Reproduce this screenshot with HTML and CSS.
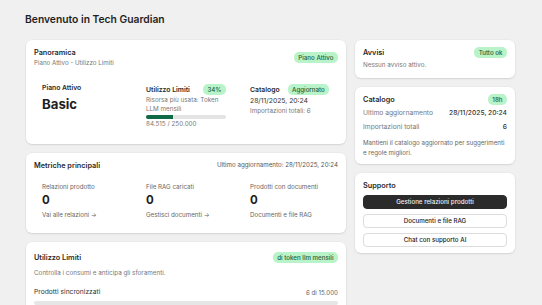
FILE: index.html
```html
<!DOCTYPE html>
<html lang="it">
<head>
  <meta charset="UTF-8" />
  <title>Tech Guardian</title>
  <link rel="stylesheet" href="styles.css">
</head>
<body>
  <h1 class="page-title">Benvenuto in Tech Guardian</h1>

  <div class="layout">
    <div class="col-main">

      <section class="card">
        <div class="card-head">
          <div>
            <h2>Panoramica</h2>
            <p class="sub">Piano Attivo - Utilizzo Limiti</p>
          </div>
          <span class="badge">Piano Attivo</span>
        </div>
        <div class="overview">
          <div class="ov-col">
            <div class="ov-label">Piano Attivo</div>
            <div class="plan">Basic</div>
          </div>
          <div class="ov-col">
            <div class="ov-row">
              <span class="ov-label">Utilizzo Limiti</span>
              <span class="badge">34%</span>
            </div>
            <p class="muted narrow">Risorsa più usata: Token LLM mensili</p>
            <div class="bar"><div class="bar-fill" style="width: 34%"></div></div>
            <p class="muted">84.515 / 250.000</p>
          </div>
          <div class="ov-col">
            <div class="ov-row">
              <span class="ov-label">Catalogo</span>
              <span class="badge">Aggiornato</span>
            </div>
            <p class="date">28/11/2025, 20:24</p>
            <p class="muted">Importazioni totali: 6</p>
          </div>
        </div>
      </section>

      <section class="card">
        <div class="card-head">
          <h2>Metriche principali</h2>
          <span class="meta">Ultimo aggiornamento: 28/11/2025, 20:24</span>
        </div>
        <div class="metrics">
          <div class="metric">
            <div class="m-label">Relazioni prodotto</div>
            <div class="m-value">0</div>
            <div class="m-link">Vai alle relazioni →</div>
          </div>
          <div class="metric">
            <div class="m-label">File RAG caricati</div>
            <div class="m-value">0</div>
            <div class="m-link">Gestisci documenti →</div>
          </div>
          <div class="metric">
            <div class="m-label">Prodotti con documenti</div>
            <div class="m-value">0</div>
            <div class="m-link">Documenti e file RAG</div>
          </div>
        </div>
      </section>

      <section class="card limits">
        <div class="card-head">
          <h2>Utilizzo Limiti</h2>
          <span class="badge">di token llm mensili</span>
        </div>
        <p class="muted intro">Controlla i consumi e anticipa gli sforamenti.</p>
        <div class="limit-row">
          <span>Prodotti sincronizzati</span>
          <span class="count">6 di 15.000</span>
        </div>
        <div class="bar wide"><div class="bar-fill" style="width: 0%"></div></div>
      </section>

    </div>

    <div class="col-side">
      <section class="card">
        <div class="card-head">
          <h2>Avvisi</h2>
          <span class="badge">Tutto ok</span>
        </div>
        <p class="muted alert-text">Nessun avviso attivo.</p>
      </section>

      <section class="card side-catalog">
        <div class="card-head">
          <h2>Catalogo</h2>
          <span class="badge">18h</span>
        </div>
        <div class="kv"><span>Ultimo aggiornamento</span><span class="kv-val">28/11/2025, 20:24</span></div>
        <div class="kv"><span>Importazioni totali</span><span class="kv-val">6</span></div>
        <p class="note">Mantieni il catalogo aggiornato per suggerimenti e regole migliori.</p>
      </section>

      <section class="card support">
        <h2>Supporto</h2>
        <div class="buttons">
          <button class="btn dark">Gestione relazioni prodotti</button>
          <button class="btn">Documenti e file RAG</button>
          <button class="btn">Chat con supporto AI</button>
        </div>
      </section>
    </div>
  </div>
</body>
</html>
```

FILE: styles.css
```css
* {
  margin: 0;
  padding: 0;
  box-sizing: border-box;
}

body {
  font-family: 'Inter', 'Liberation Sans', sans-serif;
  background: #f0f0f0;
  color: #1f1f1f;
  padding: 12px 27px 0 26px;
  overflow: hidden;
  font-size: 6px;
  line-height: 8px;
}

.page-title {
  font-size: 10.3px;
  font-weight: 600;
  line-height: 14px;
  margin-left: -1px;
  margin-bottom: 14px;
}

.layout {
  display: grid;
  grid-template-columns: 320px 160px;
  gap: 9px;
}

.col-main,
.col-side {
  display: flex;
  flex-direction: column;
  gap: 9px;
}

.card {
  background: #fff;
  border-radius: 6px;
  box-shadow: 0 1px 2px rgba(0, 0, 0, 0.1), 0 0 0 0.5px rgba(0, 0, 0, 0.04);
  padding: 7px 8px 8px;
}

.card-head {
  display: flex;
  justify-content: space-between;
  align-items: center;
}

h2 {
  font-size: 7.3px;
  font-weight: 600;
  color: #2a2a2a;
  line-height: 11px;
}

.sub {
  font-size: 6.2px;
  color: #777;
  margin-top: 1px;
}

.badge {
  background: #b9f3c9;
  color: #1f5f35;
  font-size: 6.2px;
  font-weight: 500;
  padding: 2px 4.5px;
  border-radius: 5px;
  line-height: 7px;
  white-space: nowrap;
}

.muted {
  font-size: 6.3px;
  color: #777;
  line-height: 8.5px;
}

/* overview */
.overview {
  display: grid;
  grid-template-columns: 104px 104px 1fr;
  padding: 17px 8px 7px;
}

.ov-label {
  font-size: 6.8px;
  font-weight: 600;
  color: #2a2a2a;
}

.plan {
  font-size: 13.2px;
  font-weight: 700;
  line-height: 18px;
  margin-top: 3px;
}

.ov-row {
  display: flex;
  align-items: center;
  justify-content: space-between;
  width: 80px;
  margin-bottom: 1px;
}

.ov-col:last-child .ov-row {
  justify-content: flex-start;
  gap: 8px;
}

.narrow {
  max-width: 76px;
}

.bar {
  height: 4px;
  width: 80px;
  background: #e4e4e4;
  border-radius: 2px;
  margin: 2px 0 1px;
  overflow: hidden;
}

.bar-fill {
  height: 100%;
  background: #0f6a48;
}

.bar.wide {
  width: 100%;
  background: #e6e6e6;
  margin-top: 4px;
}

.date {
  font-size: 6.8px;
  color: #333;
  line-height: 10px;
  margin: 1px 0 1px;
}

/* metrics */
.meta {
  font-size: 6.2px;
  color: #555;
}

.metrics {
  display: flex;
  padding: 12px 0 6px 8px;
}

.metric {
  flex: none;
  width: 104px;
}

.metric:last-child {
  flex: 1;
}

.m-label {
  font-size: 6.2px;
  color: #666;
}

.m-value {
  font-size: 11.5px;
  font-weight: 700;
  line-height: 14px;
  margin-top: 2px;
}

.m-link {
  font-size: 6.2px;
  color: #666;
  margin-top: 4px;
}

/* limits */
.limits {
  padding-top: 10px;
}

.intro {
  margin-top: 6px;
}

.limit-row {
  display: flex;
  justify-content: space-between;
  font-size: 6.7px;
  line-height: 9px;
  margin-top: 11px;
  color: #333;
}

.count {
  font-size: 6.2px;
  color: #666;
}

/* side */
.alert-text {
  margin-top: 3px;
}

.side-catalog {
  padding-bottom: 6px;
}

.kv {
  display: flex;
  justify-content: space-between;
  font-size: 6.7px;
  line-height: 9px;
  color: #777;
  margin-top: 4px;
}

.kv + .kv {
  margin-top: 5px;
}

.kv-val {
  font-weight: 500;
  color: #333;
}

.note {
  font-size: 6.2px;
  line-height: 10px;
  color: #666;
  margin-top: 6px;
}

.support {
  padding-bottom: 6px;
}

.buttons {
  display: flex;
  flex-direction: column;
  gap: 5px;
  margin-top: 4px;
}

.btn {
  font-family: inherit;
  font-size: 6.2px;
  font-weight: 500;
  height: 14px;
  border-radius: 4px;
  border: 1px solid #dcdcdc;
  background: #fff;
  color: #222;
}

.btn.dark {
  background: #2b2b2b;
  border-color: #2b2b2b;
  color: #f1f1f1;
}
```
